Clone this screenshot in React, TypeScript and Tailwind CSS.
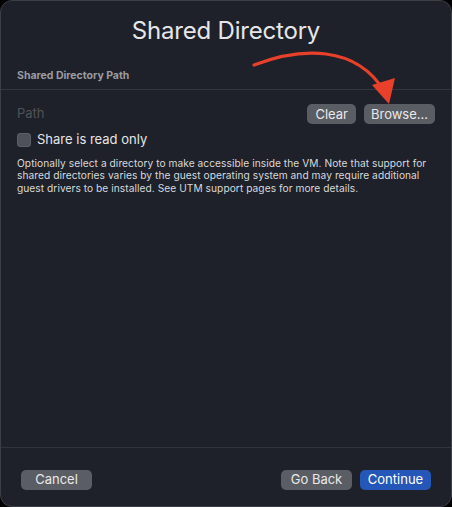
import React, { useState } from 'react';

const font = { fontFamily: 'Inter, "Liberation Sans", sans-serif' };

const Arrow = () => (
  <svg className="absolute left-0 top-0 pointer-events-none" width="452" height="130" viewBox="0 0 452 130">
    <path d="M253 64 C 300 46, 355 44, 383 90" fill="none" stroke="#e8402a" strokeWidth="3.2" strokeLinecap="round" />
    <path d="M371 84 L 388 103 L 394 77 Z" fill="#e8402a" />
  </svg>
);

const App: React.FC = () => {
  const [readOnly, setReadOnly] = useState(false);

  return (
    <div className="w-[452px] h-[507px] bg-black" style={font}>
      <div className="relative w-full h-full flex flex-col rounded-[12px] border border-[#3b3e45] bg-[#1e2129] overflow-hidden">
        <Arrow />
        <h1 className="text-center text-[24px] text-[#e6e6e8] mt-[15px] leading-[30px] tracking-[-0.2px]">Shared Directory</h1>
        <div className="px-[16px] mt-[23px] text-[10.5px] font-bold text-[#9a9ca2] leading-[14px]">Shared Directory Path</div>
        <div className="mt-[6px] h-px bg-[#34373e]" />

        <div className="flex items-center px-[16px] mt-[14px]">
          <span className="flex-1 text-[13px] text-[#505359]">Path</span>
          <button className="h-[20px] px-[8px] rounded-[5px] bg-[#5a5d63] text-[13px] text-[#e9e9ea] leading-none">Clear</button>
          <button className="ml-[8px] h-[20px] w-[71px] rounded-[5px] bg-[#5a5d63] text-[13px] text-[#e9e9ea] leading-none">Browse...</button>
        </div>

        <label className="flex items-center gap-[6px] px-[16px] mt-[6px]">
          <button
            onClick={() => setReadOnly(!readOnly)}
            className="w-[14px] h-[14px] rounded-[3px] bg-[#4e5157] border border-[#5c5f65]"
          />
          <span className="text-[13px] text-[#e6e6e8]">Share is read only</span>
        </label>

        <p className="px-[16px] mt-[7px] text-[10.2px] leading-[12.6px] text-[#d8d9db] tracking-[0.05px]">
          Optionally select a directory to make accessible inside the VM. Note that support for<br />
          shared directories varies by the guest operating system and may require additional<br />
          guest drivers to be installed. See UTM support pages for more details.
        </p>

        <div className="flex-1" />
        <div className="h-px bg-[#31343b]" />
        <div className="flex items-center px-[20px] h-[58px] pt-[5px]">
          <button className="h-[20px] w-[71px] rounded-[5px] bg-[#5a5d63] text-[13px] text-[#e9e9ea] leading-none">Cancel</button>
          <div className="flex-1" />
          <button className="h-[20px] w-[71px] rounded-[5px] bg-[#5a5d63] text-[13px] text-[#e9e9ea] leading-none">Go Back</button>
          <button className="ml-[8px] h-[20px] w-[71px] rounded-[5px] bg-[#2457b8] text-[13px] text-white leading-none">Continue</button>
        </div>
      </div>
    </div>
  );
};

export default App;
